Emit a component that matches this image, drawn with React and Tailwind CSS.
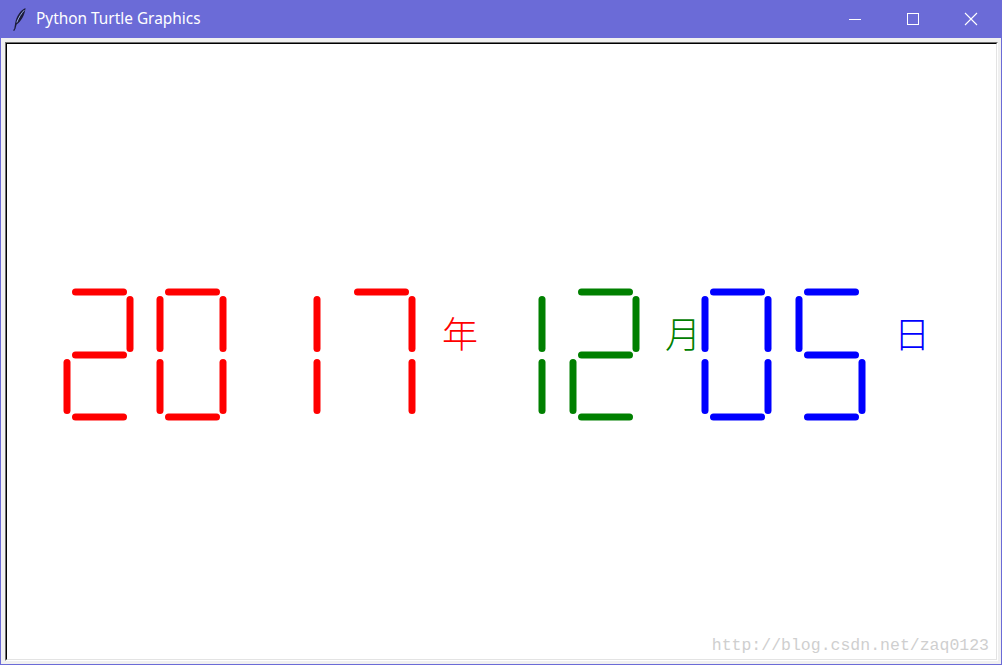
import React from "react";

const SEG = {
  a: (L) => [L + 8.5, 292, L + 56.5, 292],
  g: (L) => [L + 8.5, 355, L + 56.5, 355],
  d: (L) => [L + 8.5, 417, L + 56.5, 417],
  f: (L) => [L, 299.5, L, 348.5],
  e: (L) => [L, 362.5, L, 410.5],
  b: (L) => [L + 63, 299.5, L + 63, 348.5],
  c: (L) => [L + 63, 362.5, L + 63, 410.5],
};

const DIGITS = {
  "0": "abcdef",
  "1": "bc",
  "2": "abged",
  "5": "afgcd",
  "7": "abc",
};

function Digit({ L, ch, color }) {
  return (
    <g stroke={color} strokeWidth="7" strokeLinecap="round">
      {DIGITS[ch].split("").map((s) => {
        const [x1, y1, x2, y2] = SEG[s](L);
        return <line key={s} x1={x1} y1={y1} x2={x2} y2={y2} />;
      })}
    </g>
  );
}

function Feather() {
  return (
    <svg width="15" height="24" viewBox="0 0 15 24" className="shrink-0">
      <path d="M13.5 1 C8.5 3 4.5 9 3.2 16 L2.2 22 L3.4 22 L4.6 17.5 C9 14.5 13 8 13.5 1 Z" fill="#1c1c3a" />
      <path d="M12.3 3.2 C9.2 6.5 6.6 10.5 4.8 15.5" stroke="#a8bcff" strokeWidth="0.9" fill="none" />
      <path d="M2.7 22 L1.6 23.6" stroke="#1c1c3a" strokeWidth="1.3" />
    </svg>
  );
}

export default function App() {
  return (
    <div className="relative w-[1002px] h-[665px] bg-[#6b6bd7] flex flex-col overflow-hidden">
      {/* title bar */}
      <div className="h-[38px] shrink-0 flex items-center text-white">
        <div className="pl-[12px] pr-[9px] flex items-center">
          <Feather />
        </div>
        <span
          className="text-[15.4px] leading-none pb-[1px]"
          style={{ fontFamily: '"Noto Sans", "Open Sans", sans-serif' }}
        >
          Python Turtle Graphics
        </span>
        <div className="ml-auto flex items-center h-full">
          <div className="w-[58px] h-full flex items-center justify-center">
            <div className="w-[12px] h-[1px] bg-white" />
          </div>
          <div className="w-[58px] h-full flex items-center justify-center">
            <div className="w-[12px] h-[12px] border border-white" />
          </div>
          <div className="w-[60px] h-full flex items-center justify-center pr-[2px]">
            <svg width="14" height="14" viewBox="0 0 14 14">
              <path d="M1 1 L13 13 M13 1 L1 13" stroke="white" strokeWidth="1.1" />
            </svg>
          </div>
        </div>
      </div>
      {/* window body */}
      <div className="flex-1 mx-[1px] mb-[1px] bg-[#f0f0f0] pl-[4px] pt-[4px] pr-[3px] pb-[3px] flex">
        <div className="flex-1 flex border-t border-l border-t-[#6e6e6e] border-l-[#6e6e6e] border-b border-r border-b-white border-r-white">
          <div className="flex-1 flex border-t border-l border-t-black border-l-black border-b border-r border-b-[#e3e3e3] border-r-[#e3e3e3] bg-white">
            <svg width="989" height="615" viewBox="7 44 989 615" className="block">
              <Digit L={67} ch="2" color="#ff0000" />
              <Digit L={160} ch="0" color="#ff0000" />
              <Digit L={254} ch="1" color="#ff0000" />
              <Digit L={349} ch="7" color="#ff0000" />
              <text
                x="442"
                y="348"
                fill="#ff0000"
                fontSize="36"
                fontWeight="300"
                style={{ fontFamily: '"Noto Sans CJK SC", sans-serif' }}
              >
                年
              </text>
              <Digit L={479} ch="1" color="#008000" />
              <Digit L={573} ch="2" color="#008000" />
              <text
                x="665"
                y="348"
                fill="#008000"
                fontSize="36"
                fontWeight="300"
                style={{ fontFamily: '"Noto Sans CJK SC", sans-serif' }}
              >
                月
              </text>
              <Digit L={705} ch="0" color="#0000ff" />
              <Digit L={799} ch="5" color="#0000ff" />
              <text
                x="894"
                y="348"
                fill="#0000ff"
                fontSize="36"
                fontWeight="300"
                style={{ fontFamily: '"Noto Sans CJK SC", sans-serif' }}
              >
                日
              </text>
            </svg>
          </div>
        </div>
      </div>
      {/* watermark */}
      <div
        className="absolute right-[13px] bottom-[11px] text-[16.5px] leading-none text-[#cfcfcf] pointer-events-none"
        style={{ fontFamily: '"Liberation Mono", monospace' }}
      >
        http://blog.csdn.net/zaq0123
      </div>
    </div>
  );
}
